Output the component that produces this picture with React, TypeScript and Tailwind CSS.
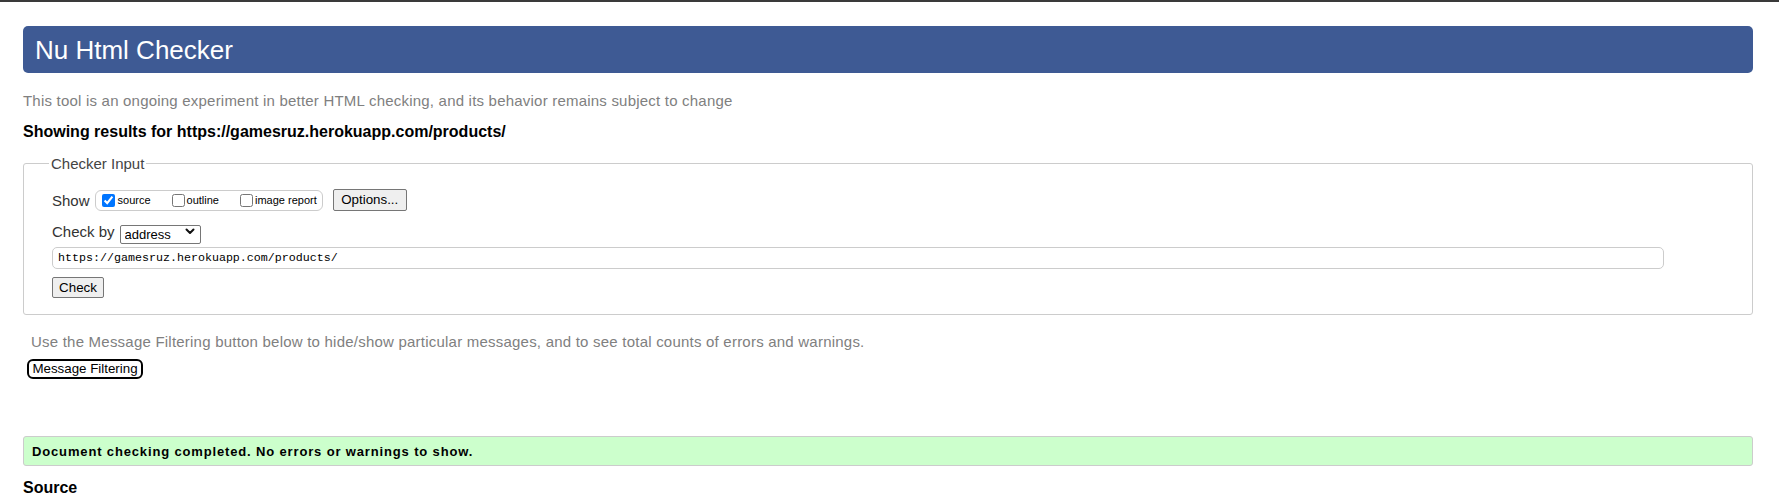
import React from "react";

function Chevron() {
  return (
    <svg width="10" height="7" viewBox="0 0 10 7" className="pointer-events-none absolute right-[6px] top-[6px]">
      <polyline points="1.5,1.5 5,5 8.5,1.5" fill="none" stroke="#111" strokeWidth="2" strokeLinecap="round" strokeLinejoin="round" />
    </svg>
  );
}

export default function App() {
  return (
    <div className="min-h-screen bg-white font-['Liberation_Sans',Arial,sans-serif] text-black">
      <div className="h-[2px] bg-[#3a3a3a]" />
      <div className="pl-[23px] pr-[26px]">
        <header className="mt-[24px] flex h-[47px] items-center rounded-[5px] bg-[#3e5a94] pl-[12px]">
          <h1 className="text-[26px] leading-[30px] text-white">Nu Html Checker</h1>
        </header>

        <p className="mt-[19px] text-[15px] leading-[18px] tracking-[0.21px] text-[#808080]">
          This tool is an ongoing experiment in better HTML checking, and its behavior remains subject to change
        </p>
        <p className="mt-[12px] text-[16px] font-bold leading-[20px]">
          Showing results for https://gamesruz.herokuapp.com/products/
        </p>

        <fieldset className="mt-[13px] rounded-[3px] border border-[#cccccc] pb-[16px] pl-[28px] pt-[17px]">
          <legend className="ml-[-3px] px-[2px] text-[15px] leading-[17px] text-[#444444]">Checker Input</legend>

          <div className="flex h-[22px] items-center">
            <span className="text-[15px] leading-[17px] text-[#333333]">Show</span>
            <div className="ml-[5px] flex h-[21px] items-center rounded-[6px] border border-[#cccccc] pl-[6px] pr-[5px] text-[11px] leading-[13px]">
              <label className="flex items-center">
                <input type="checkbox" defaultChecked className="m-0 h-[13px] w-[13px]" />
                <span className="ml-[3px]">source</span>
              </label>
              <label className="ml-[21px] flex items-center">
                <input type="checkbox" className="m-0 h-[13px] w-[13px]" />
                <span className="ml-[2px]">outline</span>
              </label>
              <label className="ml-[21px] flex items-center">
                <input type="checkbox" className="m-0 h-[13px] w-[13px]" />
                <span className="ml-[2px]">image report</span>
              </label>
            </div>
            <button className="ml-[10px] h-[22px] w-[74px] rounded-[2px] border border-[#767676] bg-[#efefef] text-[13.33px] leading-[16px]">
              Options...
            </button>
          </div>

          <div className="mt-[11px] flex h-[19px] items-center">
            <span className="text-[15px] leading-[17px] text-[#333333]">Check by</span>
            <div className="relative ml-[5px] h-[19px] w-[81px]">
              <select className="h-[19px] w-[81px] appearance-none rounded-[2px] border border-[#767676] bg-white pl-[4px] text-[13px] leading-[15px]">
                <option>address</option>
                <option>file upload</option>
                <option>text input</option>
              </select>
              <Chevron />
            </div>
          </div>

          <div className="mt-[3px]">
            <input
              type="text"
              defaultValue="https://gamesruz.herokuapp.com/products/"
              className="h-[22px] w-[1612px] rounded-[5px] border border-[#cccccc] px-[5px] font-['Liberation_Mono',monospace] text-[11.67px] leading-[14px] outline-none"
            />
          </div>

          <div className="mt-[8px] flex">
            <button className="h-[21px] w-[52px] rounded-[2px] border border-[#767676] bg-[#efefef] text-[13.33px] leading-[16px]">
              Check
            </button>
          </div>
        </fieldset>

        <p className="ml-[8px] mt-[18px] text-[15px] leading-[18px] tracking-[0.22px] text-[#808080]">
          Use the Message Filtering button below to hide/show particular messages, and to see total counts of errors and warnings.
        </p>
        <div className="ml-[4px] mt-[8px] flex">
          <button className="h-[20px] w-[116px] rounded-[6px] border-2 border-black bg-white text-[13.33px] leading-[16px]">
            Message Filtering
          </button>
        </div>

        <div className="mt-[57px] flex h-[30px] items-center rounded-[3px] border border-[#cccccc] bg-[#ccffcc] pl-[8px]">
          <p className="text-[13px] font-bold leading-[15px] tracking-[0.85px]">Document checking completed. No errors or warnings to show.</p>
        </div>

        <h2 className="mt-[12px] text-[16px] font-bold leading-[20px]">Source</h2>
      </div>
    </div>
  );
}
